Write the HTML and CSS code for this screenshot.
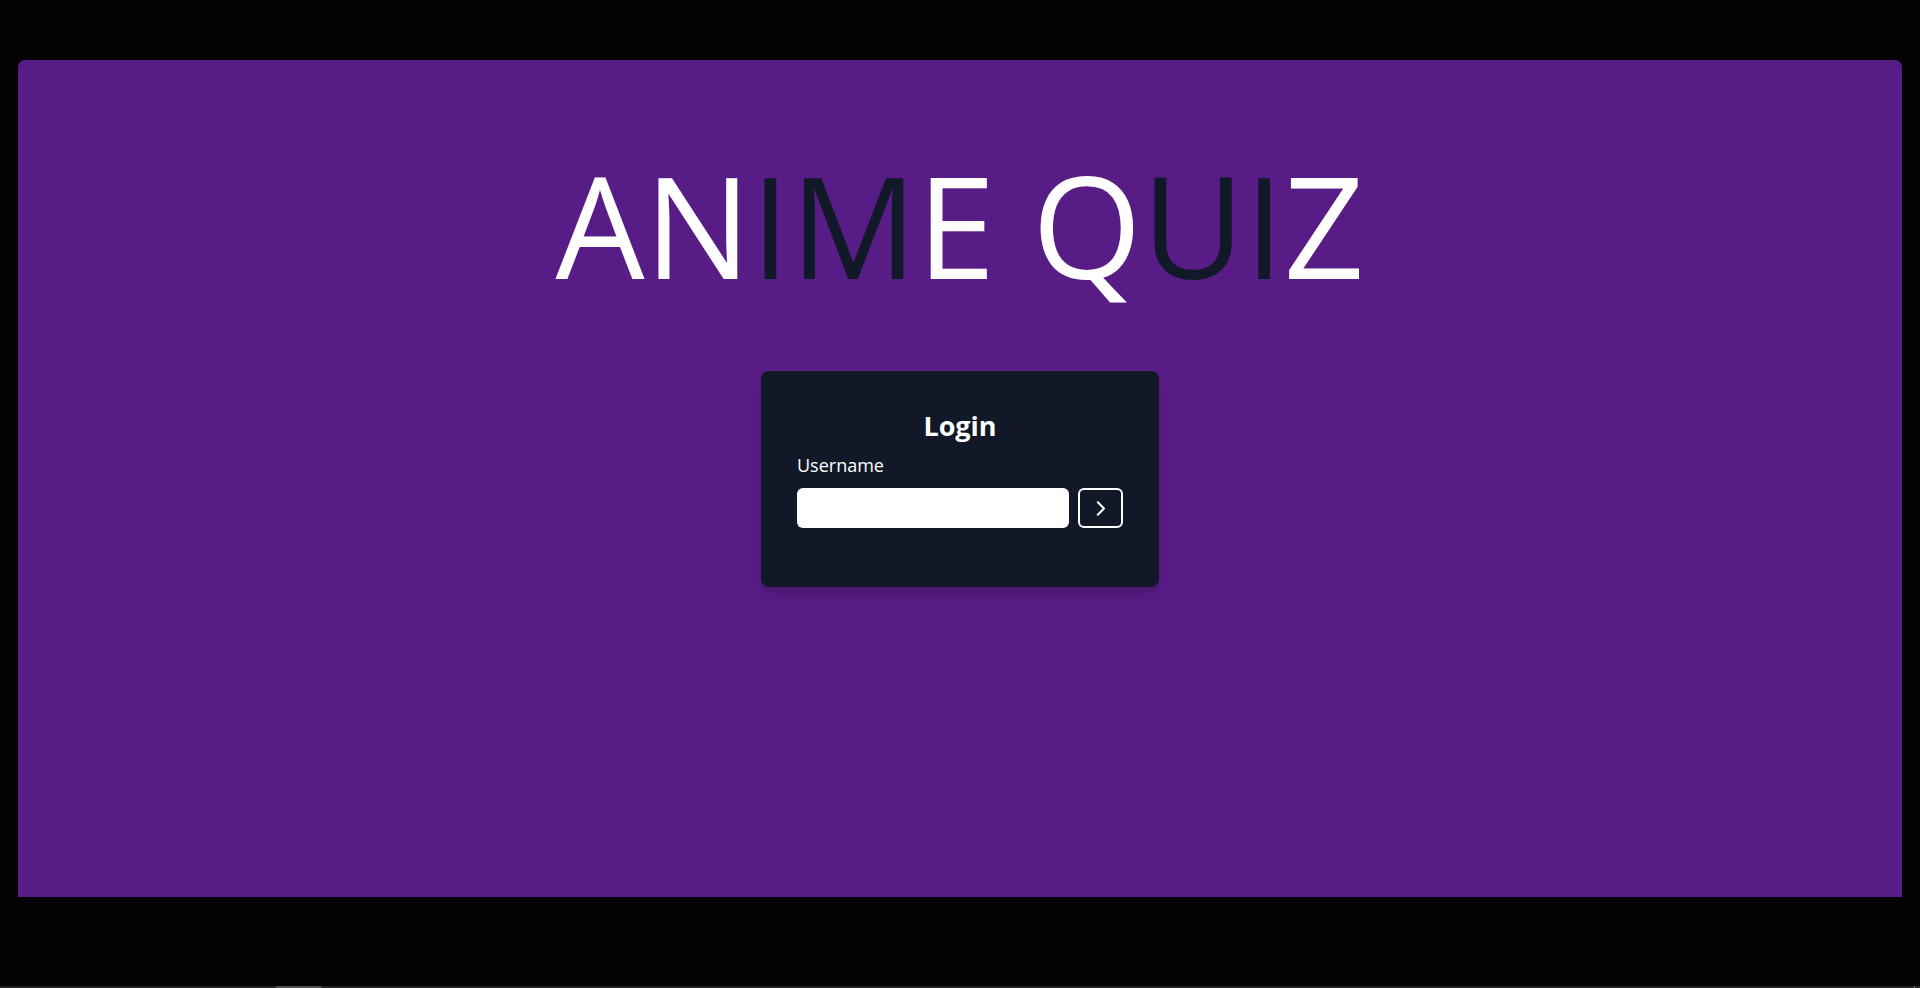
FILE: index.html
```html
<!DOCTYPE html>
<html lang="en">
<head>
<meta charset="utf-8">
<title>Anime Quiz</title>
<link rel="stylesheet" href="styles.css">
</head>
<body>
<div class="frame">
  <main class="panel">
    <h1 class="title"><span class="lt">AN</span><span class="dk">IM</span><span class="lt">E Q</span><span class="dk">UI</span><span class="lt">Z</span></h1>
    <section class="card">
      <h2 class="card-title">Login</h2>
      <label class="label" for="username">Username</label>
      <div class="row">
        <input class="input" id="username" type="text">
        <button class="go" type="button" aria-label="Submit">
          <svg width="10" height="15" viewBox="0 0 10 15"><polyline points="1.8,1.2 8,7.5 1.8,13.8" fill="none" stroke="#fff" stroke-width="2" stroke-linecap="round" stroke-linejoin="round"/></svg>
        </button>
      </div>
    </section>
  </main>
</div>
<div class="hscroll"><div class="thumb"></div><div class="end"></div></div>
</body>
</html>
```

FILE: styles.css
```css
* { box-sizing: border-box; }
html, body { margin: 0; padding: 0; }
body {
  background: #030303;
  height: 988px;
  display: flex;
  flex-direction: column;
  font-family: "Open Sans", "Noto Sans", sans-serif;
  overflow: hidden;
}
.frame {
  padding: 60px 18px 0 18px;
}
.panel {
  background: #581c87;
  height: 837px;
  border-radius: 7px 7px 0 0;
  display: flex;
  flex-direction: column;
  align-items: center;
  padding-top: 93px;
}
.title {
  margin: 0;
  font-weight: 400;
  font-size: 141px;
  line-height: 142px;
  letter-spacing: 0;
  white-space: nowrap;
}
.lt { color: #ffffff; }
.dk { color: #111827; }
.card {
  margin-top: 76px;
  width: 398px;
  height: 216px;
  background: #111827;
  border-radius: 8px;
  box-shadow: 0 10px 15px -3px rgba(0,0,0,0.15), 0 4px 6px -4px rgba(0,0,0,0.15);
  padding: 37px 36px 0 36px;
  display: flex;
  flex-direction: column;
}
.card-title {
  margin: 0;
  color: #fff;
  text-align: center;
  font-weight: 700;
  font-size: 27px;
  line-height: 36px;
}
.label {
  margin-top: 8px;
  color: #fff;
  font-size: 18px;
  line-height: 27px;
}
.row {
  margin-top: 9px;
  display: flex;
  gap: 9px;
}
.input {
  width: 272px;
  height: 40px;
  border: none;
  border-radius: 6px;
  background: #fff;
  padding: 0 10px;
  outline: none;
}
.go {
  width: 45px;
  height: 40px;
  border: 2px solid #fff;
  border-radius: 6px;
  background: transparent;
  display: flex;
  align-items: center;
  justify-content: center;
  padding: 0;
}
.hscroll {
  margin-top: auto;
  height: 2px;
  background: #232323;
  display: flex;
}
.thumb {
  margin-left: 276px;
  width: 45px;
  background: #4f4f4f;
}
.end {
  margin-left: auto;
  margin-right: 5px;
  width: 1px;
  background: #6a6a6a;
}
```
